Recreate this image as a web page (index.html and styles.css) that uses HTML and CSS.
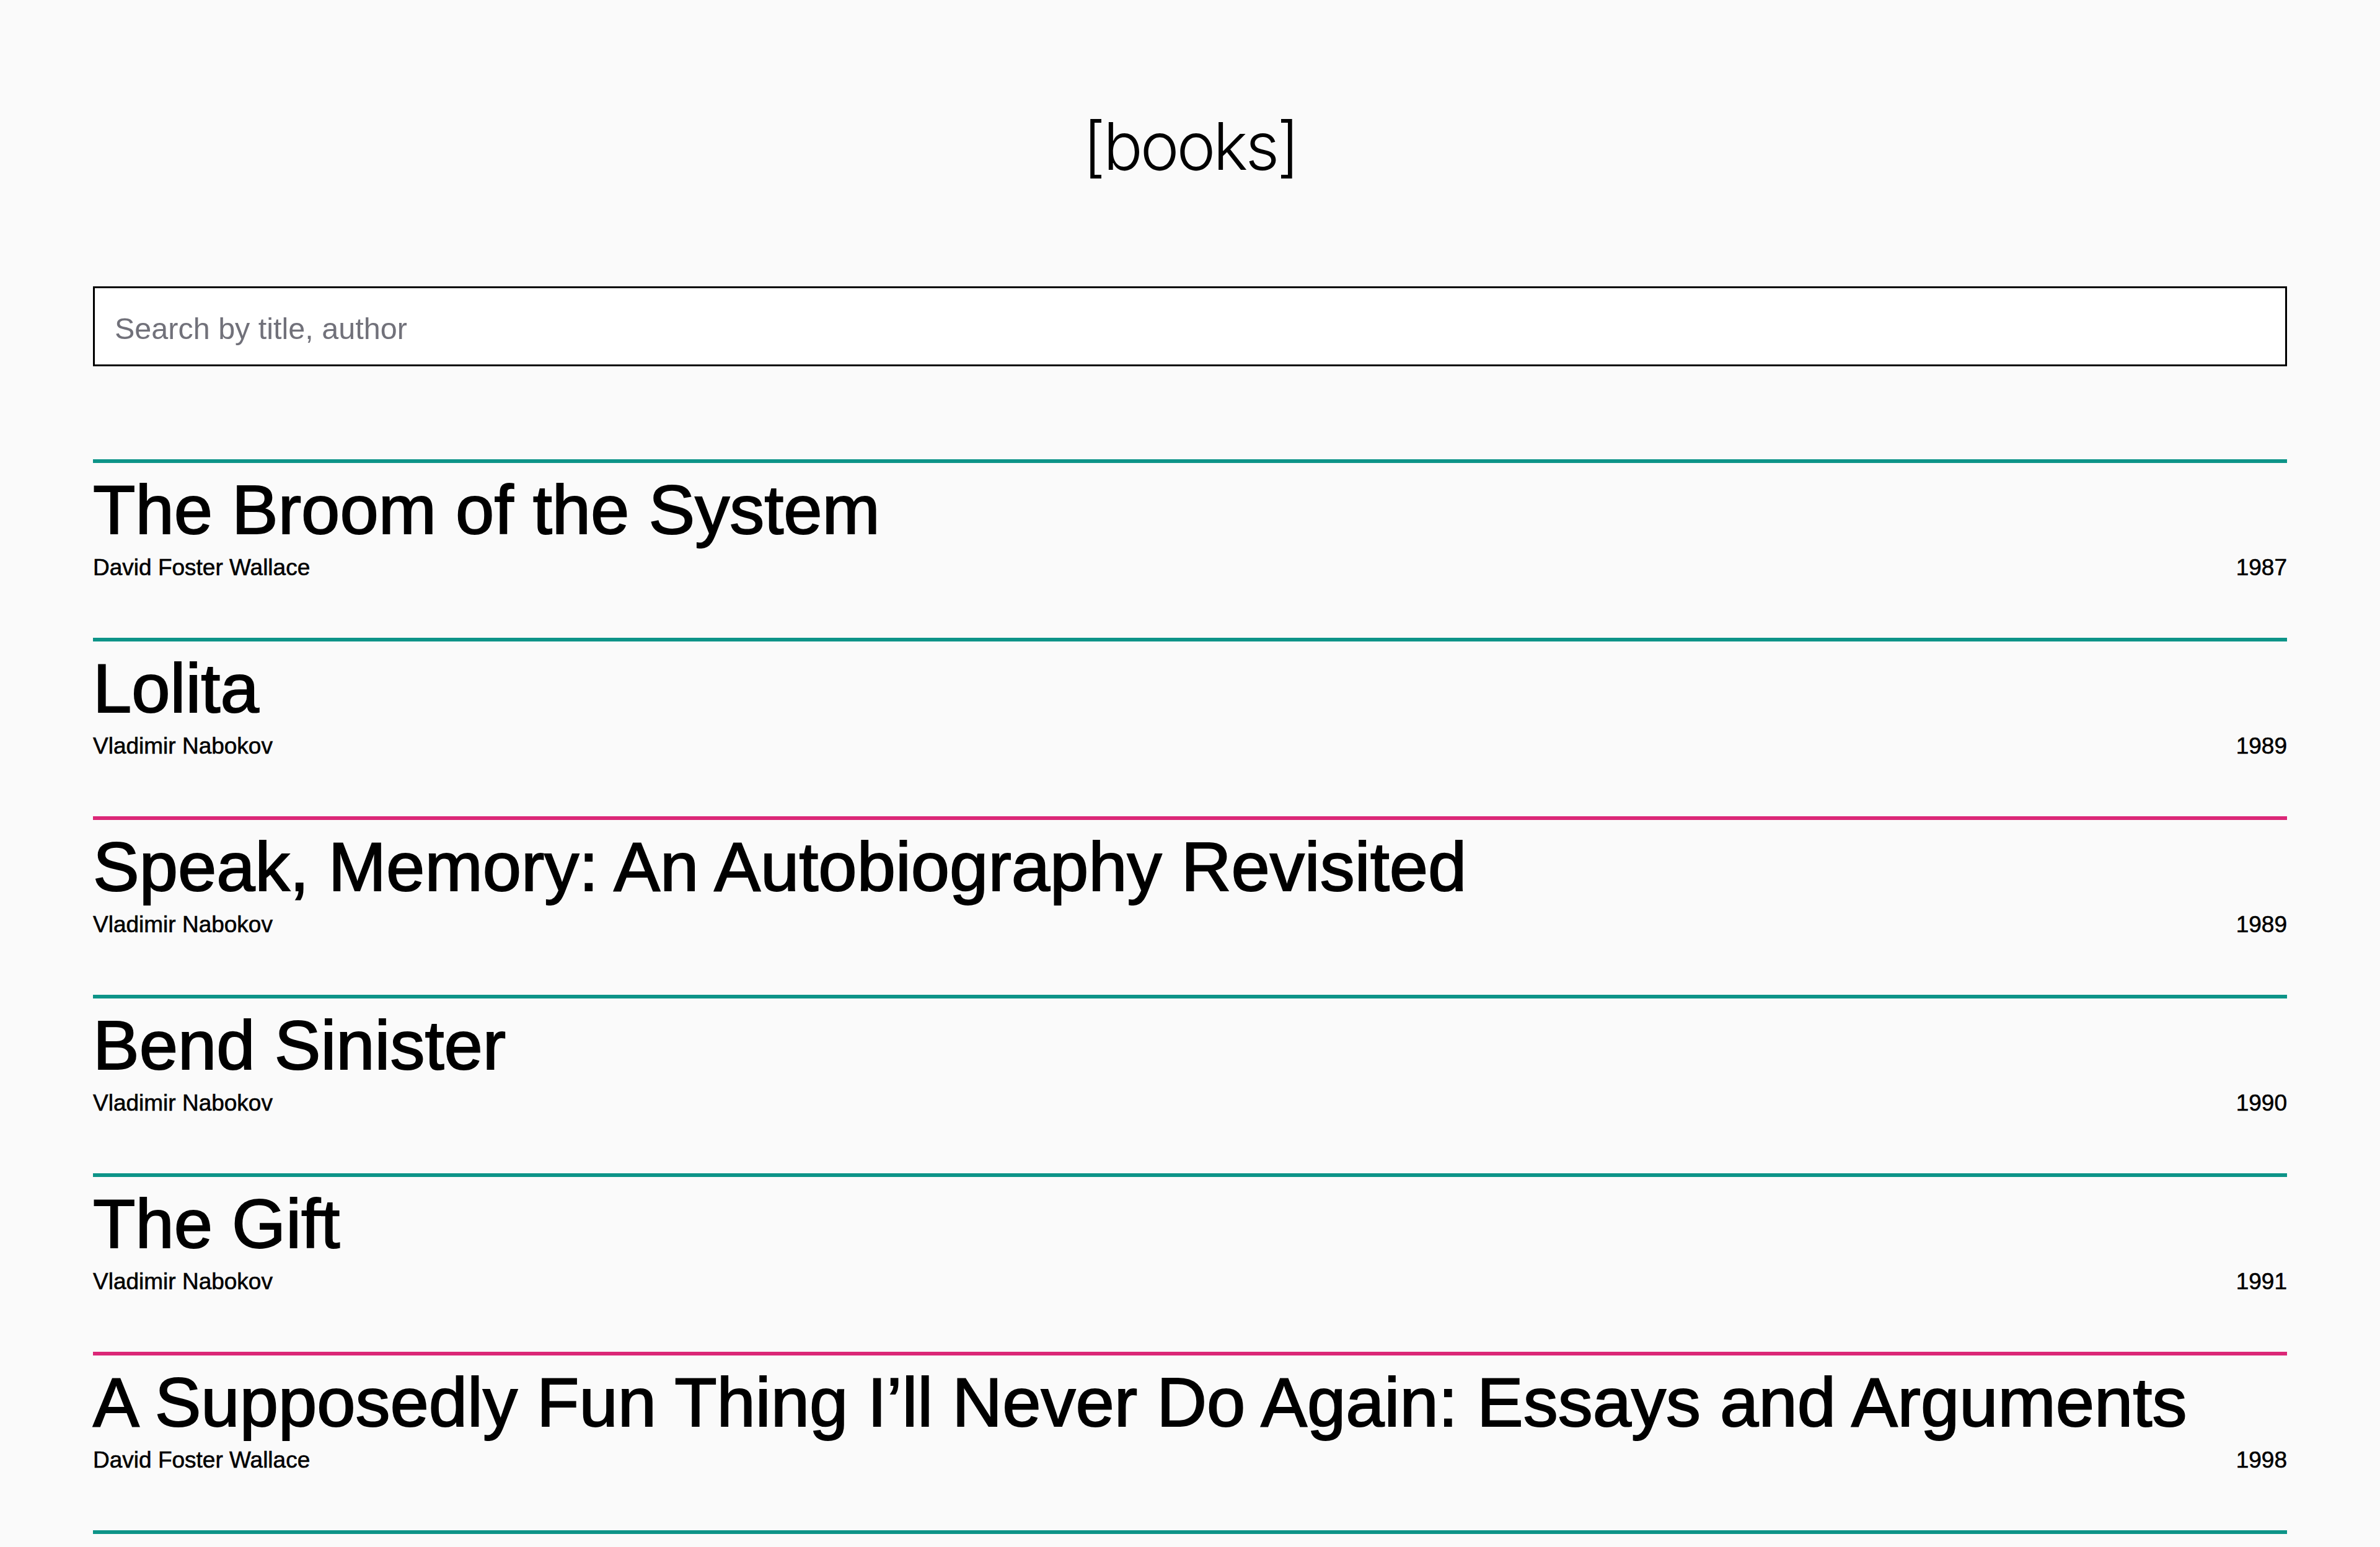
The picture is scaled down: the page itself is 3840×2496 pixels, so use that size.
FILE: index.html
```html
<!DOCTYPE html>
<html lang="en">
<head>
<meta charset="utf-8">
<title>[books]</title>
<link rel="stylesheet" href="styles.css">
</head>
<body>
<main class="page">
  <header class="masthead">
    <h1 class="logo">[books]</h1>
  </header>
  <div class="search">
    <input class="search-input" type="text" placeholder="Search by title, author">
  </div>
  <ul class="book-list">
    <li class="book teal">
      <h2 class="book-title">The Broom of the System</h2>
      <div class="book-meta"><span class="author">David Foster Wallace</span><span class="year">1987</span></div>
    </li>
    <li class="book teal">
      <h2 class="book-title">Lolita</h2>
      <div class="book-meta"><span class="author">Vladimir Nabokov</span><span class="year">1989</span></div>
    </li>
    <li class="book pink">
      <h2 class="book-title">Speak, Memory: An Autobiography Revisited</h2>
      <div class="book-meta"><span class="author">Vladimir Nabokov</span><span class="year">1989</span></div>
    </li>
    <li class="book teal">
      <h2 class="book-title">Bend Sinister</h2>
      <div class="book-meta"><span class="author">Vladimir Nabokov</span><span class="year">1990</span></div>
    </li>
    <li class="book teal">
      <h2 class="book-title">The Gift</h2>
      <div class="book-meta"><span class="author">Vladimir Nabokov</span><span class="year">1991</span></div>
    </li>
    <li class="book pink">
      <h2 class="book-title">A Supposedly Fun Thing I’ll Never Do Again: Essays and Arguments</h2>
      <div class="book-meta"><span class="author">David Foster Wallace</span><span class="year">1998</span></div>
    </li>
    <li class="book teal">
      <h2 class="book-title">Brief Interviews with Hideous Men</h2>
      <div class="book-meta"><span class="author">David Foster Wallace</span><span class="year">1999</span></div>
    </li>
  </ul>
</main>
</body>
</html>
```

FILE: styles.css
```css
html, body {
  margin: 0;
  padding: 0;
  background: #fafafa;
  color: #000;
  font-family: "Liberation Sans", Arial, sans-serif;
}

.page {
  padding: 0 150px;
}

.masthead {
  padding-top: 184px;
  display: flex;
  justify-content: center;
}

.logo {
  margin: 0;
  font-family: Inter, Roboto, "Liberation Sans", sans-serif;
  font-weight: 300;
  font-size: 106px;
  line-height: 104px;
  letter-spacing: -4px;
}

.search {
  margin-top: 174px;
}

.search-input {
  display: block;
  width: 100%;
  box-sizing: border-box;
  height: 129px;
  margin: 0;
  padding: 6px 32px 0;
  border: 3px solid #000;
  border-radius: 0;
  background: #fff;
  font-family: "Liberation Sans", Arial, sans-serif;
  font-size: 48.5px;
  color: #000;
  outline: none;
}

.search-input::placeholder {
  color: #71717a;
}

.book-list {
  list-style: none;
  margin: 150px 0 0;
  padding: 0;
}

.book {
  border-top: 6px solid #0d9488;
  padding: 20px 0 95px;
}

.book.pink {
  border-top-color: #db2777;
}

.book-title {
  margin: 0;
  font-size: 112px;
  line-height: 112px;
  font-weight: 400;
  -webkit-text-stroke: 2px #000;
}

.book-meta {
  margin-top: 18px;
  display: flex;
  justify-content: space-between;
  font-size: 37px;
  line-height: 37px;
  -webkit-text-stroke: 0.6px #000;
}
```
